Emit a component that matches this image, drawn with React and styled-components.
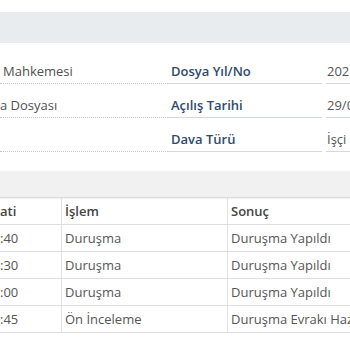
import React from 'react';
import styled, { createGlobalStyle } from 'styled-components';

const GlobalStyle = createGlobalStyle`
	html, body {
		margin: 0;
		padding: 0;
		background: #fff;
		overflow: hidden;
	}
	body {
		font-family: "Open Sans", "Noto Sans", "Liberation Sans", sans-serif;
		font-size: 13px;
		color: #555;
	}
`

const info = [
	{ value: 'Mahkemesi', indent: 3, label: 'Dosya Yıl/No', other: '2021' },
	{ value: 'a Dosyası', indent: 0, label: 'Açılış Tarihi', other: '29/0' },
	{ value: '', indent: 0, label: 'Dava Türü', other: 'İşçi İ' },
]

const rows = [
	{ time: ':40', action: 'Duruşma', result: 'Duruşma Yapıldı' },
	{ time: ':30', action: 'Duruşma', result: 'Duruşma Yapıldı' },
	{ time: ':00', action: 'Duruşma', result: 'Duruşma Yapıldı' },
	{ time: ':45', action: 'Ön İnceleme', result: 'Duruşma Evrakı Hazırlandı' },
]

const App = () => {
	return (
		<Page>
			<GlobalStyle />
			<TopBar />
			<InfoGrid>
				{info.map((r, i) => (
					<React.Fragment key={i}>
						<ValueCell indent={r.indent}>{r.value}</ValueCell>
						<LabelCell>{r.label}</LabelCell>
						<OtherCell>{r.other}</OtherCell>
					</React.Fragment>
				))}
			</InfoGrid>
			<PanelBar />
			<Table>
				<thead>
					<tr>
						<Th>ati</Th>
						<Th>İşlem</Th>
						<Th>Sonuç</Th>
					</tr>
				</thead>
				<tbody>
					{rows.map((r, i) => (
						<tr key={i}>
							<Td>{r.time}</Td>
							<Td>{r.action}</Td>
							<Td>{r.result}</Td>
						</tr>
					))}
				</tbody>
			</Table>
		</Page>
	)
}

export default App

const Page = styled.div`
	width: 350px;
	height: 350px;
	padding-top: 12px;
	box-sizing: border-box;
	overflow: hidden;
`

const TopBar = styled.div`
	height: 31px;
	background: #e9ecef;
`

const InfoGrid = styled.div`
	display: grid;
	grid-template-columns: 168px 154px 60px;
	margin-top: 7px;
	width: 400px;
`

const Cell = styled.div`
	height: 34px;
	padding: 14px 0 5px;
	box-sizing: border-box;
	line-height: 14px;
	white-space: nowrap;
	overflow: hidden;
`

const ValueCell = styled(Cell)`
	padding-left: ${p => p.indent}px;
	color: #505050;
	border-bottom: 1px dotted #c4c8cc;
`

const LabelCell = styled(Cell)`
	padding-left: 3px;
	color: #2e4a6b;
	font-weight: 600;
	border-bottom: 1px solid #d3d9df;
`

const OtherCell = styled(Cell)`
	margin-left: 4px;
	padding-left: 1px;
	color: #555;
	border-bottom: 1px solid #d3d9df;
`

const PanelBar = styled.div`
	height: 26px;
	margin-top: 19px;
	background: #f1f1f1;
	border-bottom: 1px solid #dcdcdc;
	box-shadow: 0 1px 1px rgba(0, 0, 0, 0.05);
`

const Table = styled.table`
	border-collapse: collapse;
	table-layout: fixed;
	width: 400px;

	th:nth-child(1), td:nth-child(1) { width: 61px; padding-left: 0; }
	th:nth-child(2), td:nth-child(2) { width: 162px; }
	th:last-child, td:last-child { border-right: none; }
`

const Th = styled.th`
	height: 26px;
	padding: 0 0 0 3px;
	text-align: left;
	font-weight: 600;
	color: #444;
	border-bottom: 1px solid #dedede;
	border-right: 1px solid #e2e2e2;
	white-space: nowrap;
`

const Td = styled.td`
	height: 26px;
	padding: 0 0 0 3px;
	color: #555;
	border-bottom: 1px solid #dedede;
	border-right: 1px solid #e2e2e2;
	white-space: nowrap;
	overflow: hidden;
`
